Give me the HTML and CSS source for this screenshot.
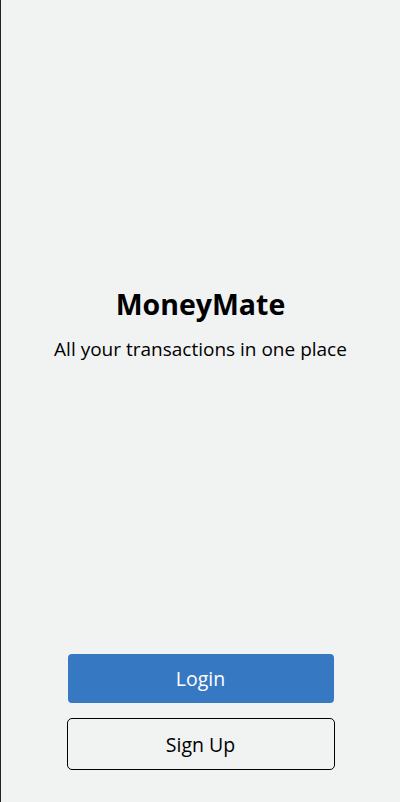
FILE: index.html
```html
<!DOCTYPE html>
<html lang="en">
<head>
<meta charset="utf-8">
<title>MoneyMate</title>
<link rel="stylesheet" href="styles.css">
</head>
<body>
<div class="screen">
  <div class="hero">
    <h1 class="title">MoneyMate</h1>
    <p class="subtitle">All your transactions in one place</p>
  </div>
  <div class="actions">
    <button class="btn btn-primary">Login</button>
    <button class="btn btn-outline">Sign Up</button>
  </div>
</div>
</body>
</html>
```

FILE: styles.css
```css
* { box-sizing: border-box; }
html, body {
  margin: 0;
  padding: 0;
  height: 100%;
}
body {
  background: #f1f2f2;
  font-family: "Open Sans", "Noto Sans", sans-serif;
  color: #000;
}
.screen {
  height: 802px;
  border-left: 1px solid #222;
  display: flex;
  flex-direction: column;
  align-items: center;
}
.hero {
  flex: 1;
  display: flex;
  flex-direction: column;
  align-items: center;
  justify-content: center;
  padding-bottom: 6px;
}
.title {
  margin: 0;
  font-size: 28.5px;
  font-weight: 700;
  line-height: 36px;
}
.subtitle {
  margin: 14px 0 0;
  font-size: 19px;
  line-height: 26px;
}
.actions {
  display: flex;
  flex-direction: column;
  align-items: center;
  gap: 15px;
  padding-bottom: 32px;
}
.btn {
  font-family: inherit;
  font-size: 19.5px;
  cursor: pointer;
}
.btn-primary {
  width: 266px;
  height: 49px;
  background: #3778c2;
  color: #fff;
  border: none;
  border-radius: 4px;
}
.btn-outline {
  width: 268px;
  height: 52px;
  background: transparent;
  color: #000;
  border: 1px solid #000;
  border-radius: 5px;
}
```
